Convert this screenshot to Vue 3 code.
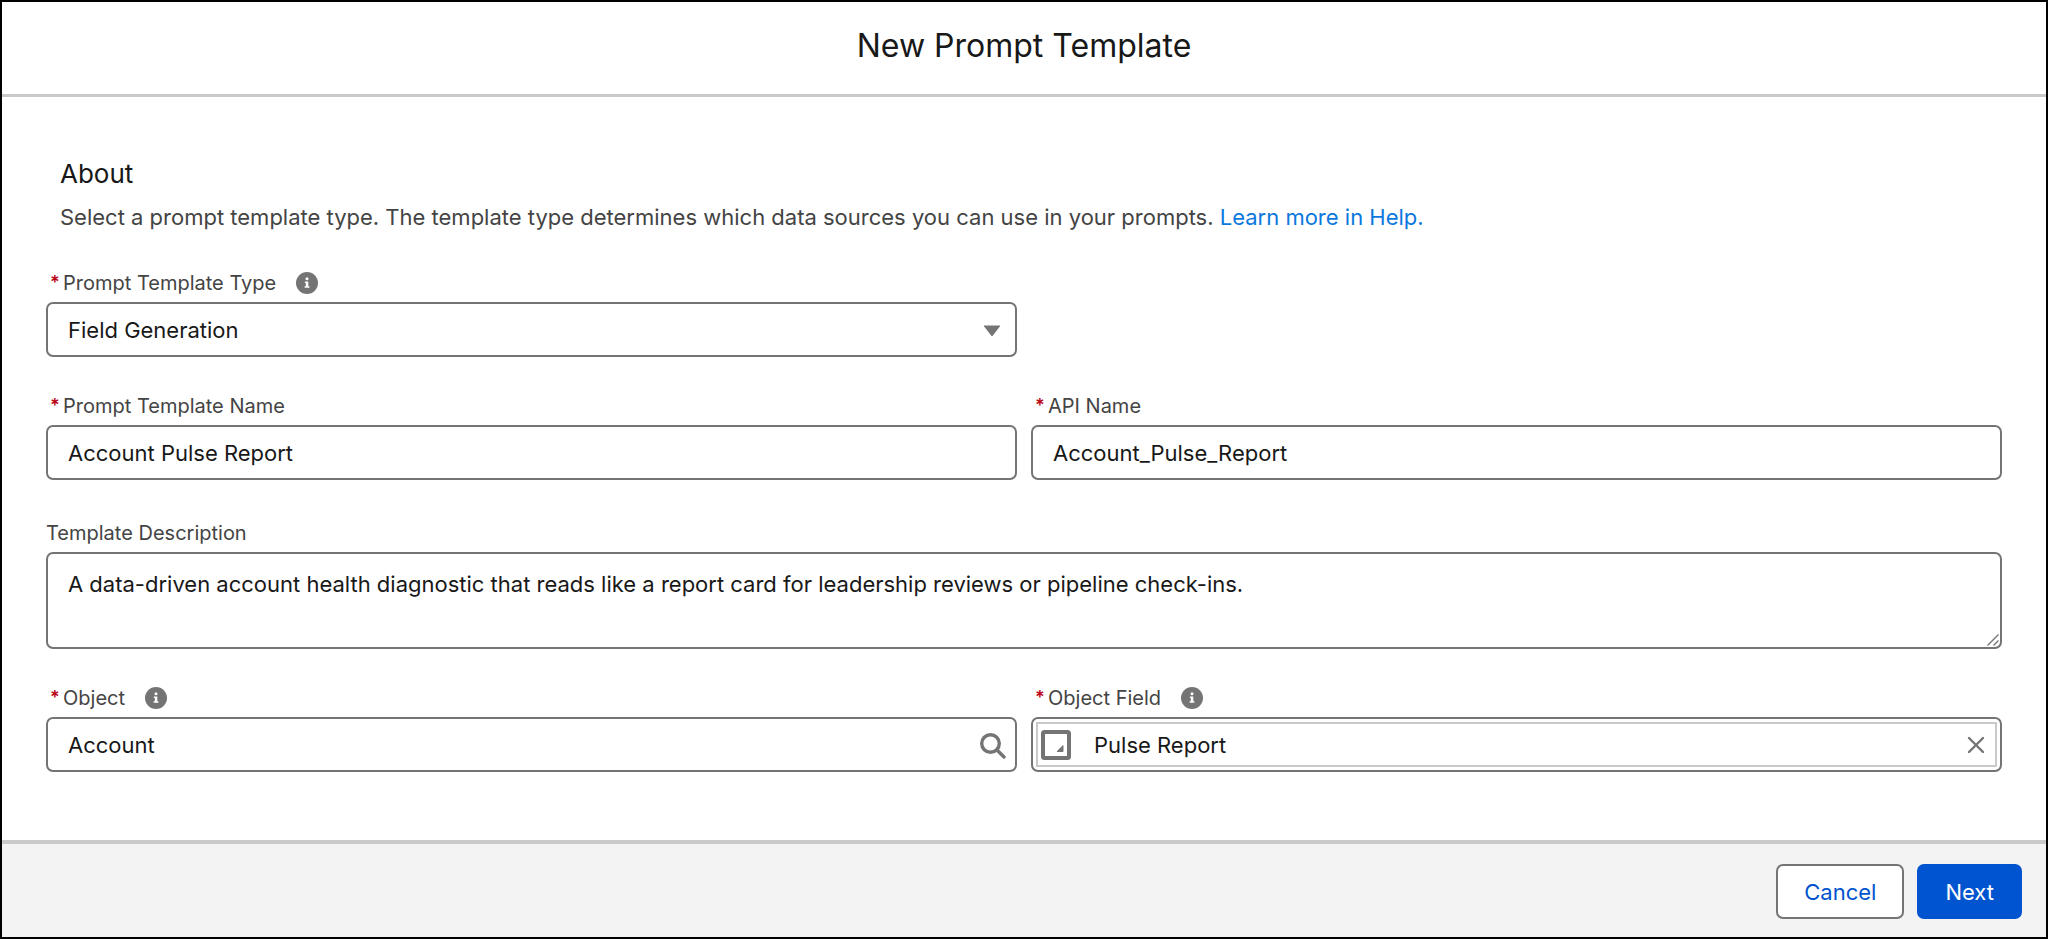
<script setup>
import { ref } from 'vue'

const templateType = ref('Field Generation')
const templateName = ref('Account Pulse Report')
const apiName = ref('Account_Pulse_Report')
const description = ref('A data-driven account health diagnostic that reads like a report card for leadership reviews or pipeline check-ins.')
const objectName = ref('Account')
const objectField = ref('Pulse Report')
</script>

<template>
  <form class="modal" @submit.prevent>
    <header class="modal-header">
      <h1>New Prompt Template</h1>
    </header>

    <main class="modal-body">
      <section class="about">
        <h2>About</h2>
        <p>
          Select a prompt template type. The template type determines which data sources you can use in your prompts.
          <a href="#">Learn more in Help.</a>
        </p>
      </section>

      <div class="row">
        <div class="field">
          <div class="label-row">
            <span class="required">*</span>
            <label for="type">Prompt Template Type</label>
            <button type="button" class="info" aria-label="Help: Prompt Template Type">
              <svg viewBox="0 0 22 22"><circle cx="11" cy="11" r="11" /><circle cx="11" cy="6.8" r="1.5" class="mark" /><path class="mark" d="M8.9 9.5h3.4v4.7h1.1v1.6H8.6v-1.6h1.2v-3.1h-.9z" /></svg>
            </button>
          </div>
          <div class="control">
            <select id="type" v-model="templateType" class="box">
              <option>Field Generation</option>
            </select>
            <svg class="caret" viewBox="0 0 18 12"><path d="M1.4 0.5h15.2q1 0 .4.8L9.7 10.8q-.7.8-1.4 0L1 1.3Q.4.5 1.4.5z" /></svg>
          </div>
        </div>
      </div>

      <div class="row names">
        <div class="field">
          <div class="label-row">
            <span class="required">*</span>
            <label for="name">Prompt Template Name</label>
          </div>
          <input id="name" v-model="templateName" class="box" type="text" />
        </div>
        <div class="field">
          <div class="label-row">
            <span class="required">*</span>
            <label for="api">API Name</label>
          </div>
          <input id="api" v-model="apiName" class="box" type="text" />
        </div>
      </div>

      <div class="field">
        <div class="label-row plain">
          <label for="description">Template Description</label>
        </div>
        <div class="control">
          <textarea id="description" v-model="description" class="box" rows="2"></textarea>
          <svg class="grip" viewBox="0 0 12 12"><path d="M.5 11.5l11-11M6.5 11.5l5-5" /></svg>
        </div>
      </div>

      <div class="row">
        <div class="field">
          <div class="label-row">
            <span class="required">*</span>
            <label for="object">Object</label>
            <button type="button" class="info" aria-label="Help: Object">
              <svg viewBox="0 0 22 22"><circle cx="11" cy="11" r="11" /><circle cx="11" cy="6.8" r="1.5" class="mark" /><path class="mark" d="M8.9 9.5h3.4v4.7h1.1v1.6H8.6v-1.6h1.2v-3.1h-.9z" /></svg>
            </button>
          </div>
          <div class="control">
            <input id="object" v-model="objectName" class="box" type="text" />
            <svg class="search" viewBox="0 0 26 26"><circle cx="10.5" cy="10.5" r="8.8" /><path d="M17 17l7 7" /></svg>
          </div>
        </div>
        <div class="field">
          <div class="label-row">
            <span class="required">*</span>
            <label for="object-field">Object Field</label>
            <button type="button" class="info" aria-label="Help: Object Field">
              <svg viewBox="0 0 22 22"><circle cx="11" cy="11" r="11" /><circle cx="11" cy="6.8" r="1.5" class="mark" /><path class="mark" d="M8.9 9.5h3.4v4.7h1.1v1.6H8.6v-1.6h1.2v-3.1h-.9z" /></svg>
            </button>
          </div>
          <div class="box pill-box">
            <div class="pill">
              <svg class="pill-icon" viewBox="0 0 30 30"><rect x="2" y="2" width="26" height="26" rx="1.5" /><path d="M21.5 15.6q1-.8 1 .4v5q0 1-1 1h-5q-1.2 0-.4-.9z" /></svg>
              <input id="object-field" v-model="objectField" type="text" readonly />
              <button type="button" class="clear" aria-label="Remove">
                <svg viewBox="0 0 18 18"><path d="M2 2l14 14M16 2L2 16" /></svg>
              </button>
            </div>
          </div>
        </div>
      </div>
    </main>

    <footer class="modal-footer">
      <button type="button" class="btn">Cancel</button>
      <button type="submit" class="btn primary">Next</button>
    </footer>
  </form>
</template>

<style>
body {
  background: #fff;
}
</style>

<style scoped>
* {
  box-sizing: border-box;
}

.modal {
  display: flex;
  flex-direction: column;
  min-height: 100vh;
  border: 2px solid #000;
  background: #fff;
  color: #181818;
  font-family: Inter, "Liberation Sans", sans-serif;
  font-size: 22px;
  line-height: 32px;
}

input,
select,
textarea,
button {
  margin: 0;
  color: inherit;
  font: inherit;
}

.modal-header {
  padding: 22px 24px 26px;
  border-bottom: 3px solid #c9c9c9;
  text-align: center;
}

h1,
h2,
p {
  margin: 0;
  font-weight: 400;
}

h1 {
  font-size: 32px;
  line-height: 44px;
}

.modal-body {
  flex: 1;
  padding: 61px 44px 0;
}

.about {
  padding-left: 14px;
  margin-bottom: 35px;
}

h2 {
  font-size: 26px;
  line-height: 32px;
  margin-bottom: 11px;
}

.about p {
  color: #444;
}

a {
  color: #0b78de;
  text-decoration: none;
}

.row {
  display: grid;
  grid-template-columns: 1fr 1fr;
  gap: 14px;
  margin-bottom: 34px;
}

.names {
  margin-bottom: 38px;
}

.names + .field {
  margin-bottom: 34px;
}

.label-row {
  display: flex;
  align-items: center;
  height: 34px;
  padding: 0 0 4px 4px;
  color: #444;
  font-size: 20px;
}

.label-row.plain {
  padding-left: 0;
}

.required {
  width: 13px;
  color: #ba0517;
  font-size: 18px;
  font-weight: 600;
}

.info {
  display: flex;
  margin-left: 20px;
  padding: 0;
  border: 0;
  background: none;
}

.info svg {
  width: 22px;
  height: 22px;
  fill: #747474;
}

.info .mark {
  fill: #fff;
}

.control {
  position: relative;
}

.box {
  display: block;
  width: 100%;
  height: 55px;
  padding: 0 20px;
  border: 2px solid #747474;
  border-radius: 7px;
  background: #fff;
  outline: none;
}

select.box {
  appearance: none;
}

textarea.box {
  height: auto;
  padding: 14px 20px 15px;
  resize: none;
  overflow: hidden;
}

.caret {
  position: absolute;
  top: 23px;
  right: 16px;
  width: 18px;
  height: 12px;
  fill: #747474;
}

.grip {
  position: absolute;
  right: 3px;
  bottom: 3px;
  width: 12px;
  height: 12px;
  fill: none;
  stroke: #747474;
  stroke-width: 1.4;
}

.search {
  position: absolute;
  top: 16px;
  right: 11px;
  width: 26px;
  height: 26px;
  fill: none;
  stroke: #747474;
  stroke-width: 3.4;
  stroke-linecap: round;
}

.pill-box {
  padding: 3px;
}

.pill {
  display: flex;
  align-items: center;
  height: 100%;
  padding: 0 10px 0 3px;
  border: 2px solid #c9c9c9;
}

.pill-icon {
  flex: none;
  width: 30px;
  height: 30px;
  fill: #747474;
}

.pill-icon rect {
  fill: none;
  stroke: #747474;
  stroke-width: 4;
}

.pill input {
  flex: 1;
  min-width: 0;
  height: 32px;
  padding: 0 23px;
  border: 0;
  background: none;
  outline: none;
}

.clear {
  display: flex;
  padding: 0;
  border: 0;
  background: none;
}

.clear svg {
  width: 18px;
  height: 18px;
  fill: none;
  stroke: #747474;
  stroke-width: 2.4;
  stroke-linecap: round;
}

.modal-footer {
  display: flex;
  justify-content: flex-end;
  gap: 13px;
  padding: 20px 24px 18px;
  border-top: 4px solid #c9c9c9;
  background: #f3f3f3;
}

.btn {
  height: 55px;
  padding: 0 26px;
  border: 2px solid #747474;
  border-radius: 7px;
  background: #fff;
  color: #0054d0;
}

.btn.primary {
  border-color: #0054d0;
  background: #0054d0;
  color: #fff;
}
</style>
